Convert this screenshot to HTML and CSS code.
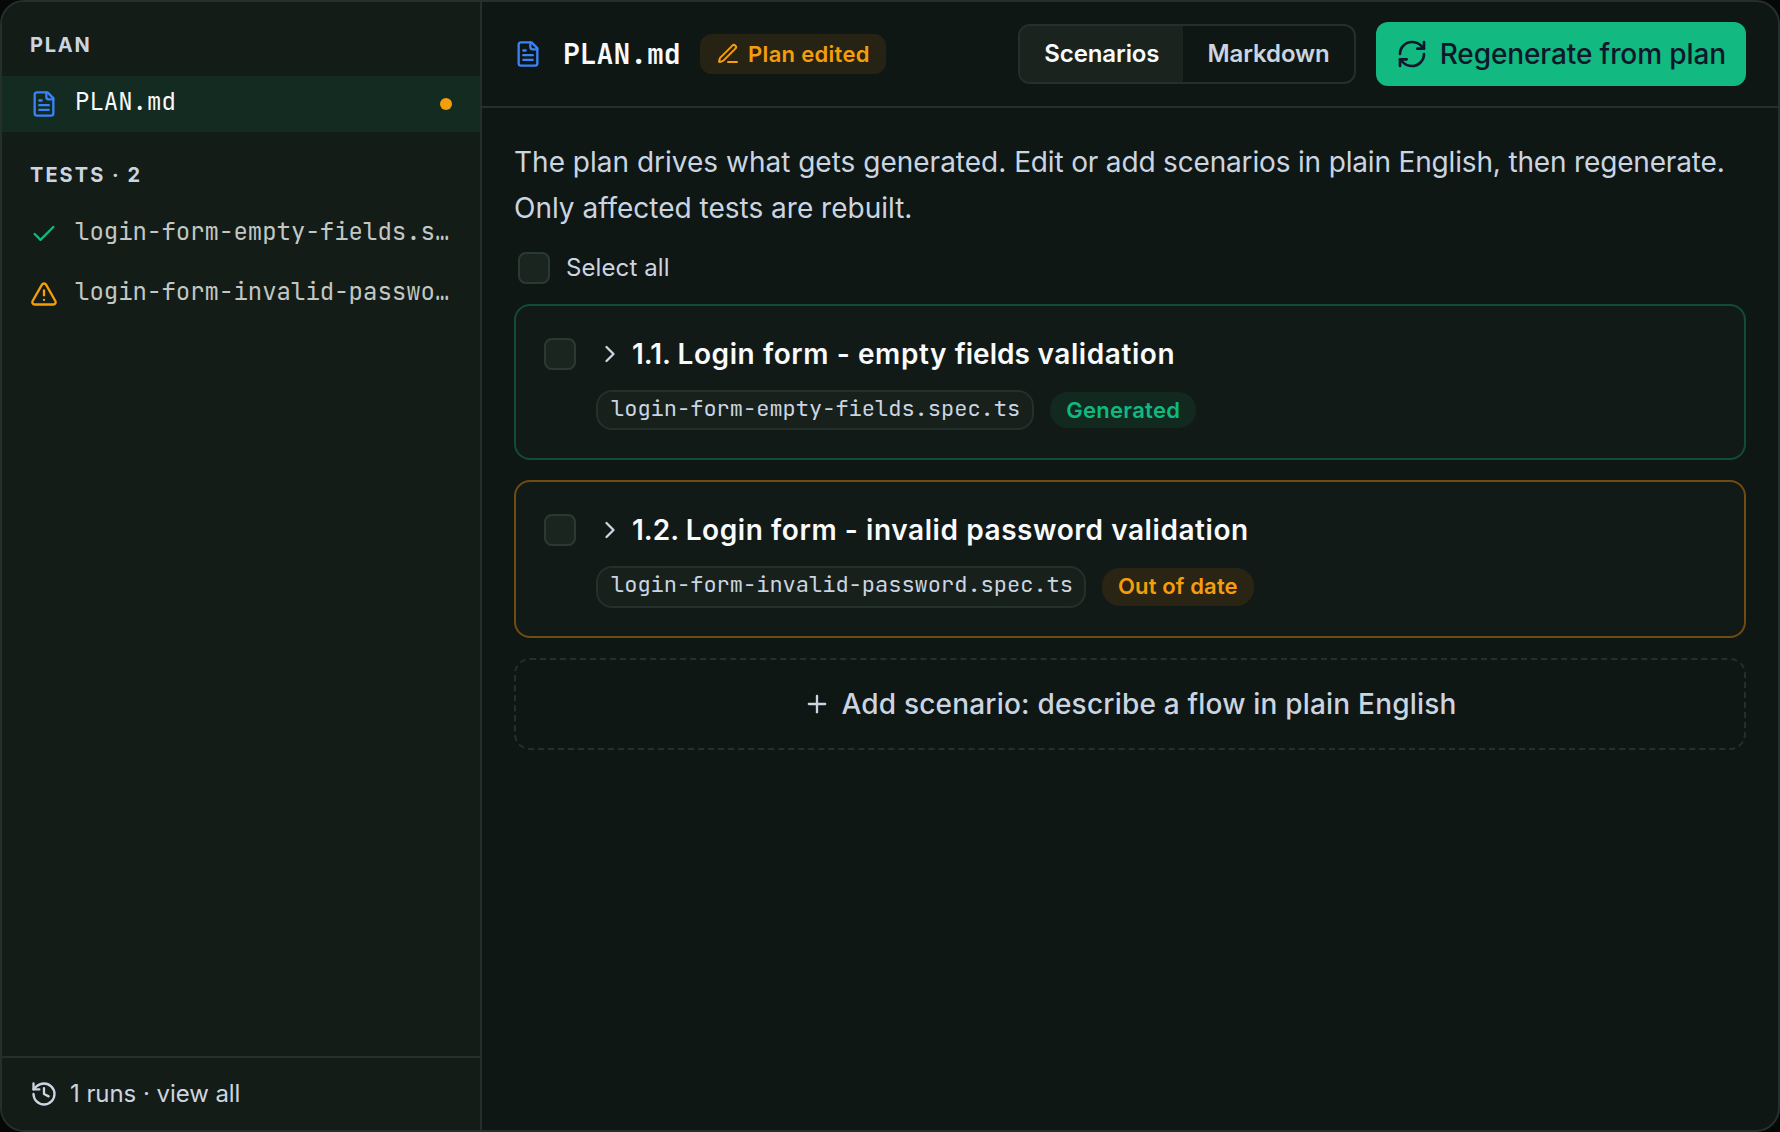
FILE: index.html
```html
<!DOCTYPE html>
<html lang="en">
<head>
<meta charset="utf-8">
<title>PLAN.md</title>
<link rel="stylesheet" href="styles.css">
</head>
<body>
<svg class="sprite" aria-hidden="true">
  <symbol id="file" viewBox="0 0 24 24"><path d="M15 2H6a2 2 0 0 0-2 2v16a2 2 0 0 0 2 2h12a2 2 0 0 0 2-2V7Z"/><path d="M14 2v4a2 2 0 0 0 2 2h4"/><path d="M10 9H8"/><path d="M16 13H8"/><path d="M16 17H8"/></symbol>
  <symbol id="check" viewBox="0 0 24 24"><path d="M20 6 9 17l-5-5"/></symbol>
  <symbol id="alert" viewBox="0 0 24 24"><path d="m21.73 18-8-14a2 2 0 0 0-3.48 0l-8 14A2 2 0 0 0 4 21h16a2 2 0 0 0 1.73-3"/><path d="M12 9v4"/><path d="M12 17h.01"/></symbol>
  <symbol id="history" viewBox="0 0 24 24"><path d="M3 12a9 9 0 1 0 9-9 9.75 9.75 0 0 0-6.74 2.74L3 8"/><path d="M3 3v5h5"/><path d="M12 7v5l4 2"/></symbol>
  <symbol id="pen" viewBox="0 0 24 24"><path d="M12 20h9"/><path d="M16.376 3.622a1 1 0 0 1 3.002 3.002L7.368 18.635a2 2 0 0 1-.855.506l-2.872.838a.5.5 0 0 1-.62-.62l.838-2.872a2 2 0 0 1 .506-.854z"/></symbol>
  <symbol id="refresh" viewBox="0 0 24 24"><path d="M3 12a9 9 0 0 1 9-9 9.75 9.75 0 0 1 6.74 2.74L21 8"/><path d="M21 3v5h-5"/><path d="M21 12a9 9 0 0 1-9 9 9.75 9.75 0 0 1-6.74-2.74L3 16"/><path d="M8 16H3v5"/></symbol>
  <symbol id="chevron" viewBox="0 0 24 24"><path d="m9 18 6-6-6-6"/></symbol>
  <symbol id="plus" viewBox="0 0 24 24"><path d="M5 12h14"/><path d="M12 5v14"/></symbol>
</svg>
<div class="window">
  <aside class="sidebar">
    <h2 class="label">PLAN</h2>
    <div class="row row-active">
      <svg class="icon blue"><use href="#file"/></svg>
      <span class="row-name">PLAN.md</span>
      <span class="dot"></span>
    </div>
    <h2 class="label label-tests">TESTS · 2</h2>
    <div class="row row-test">
      <svg class="icon green"><use href="#check"/></svg>
      <span class="row-name">login-form-empty-fields.spec.ts</span>
    </div>
    <div class="row row-test">
      <svg class="icon amber"><use href="#alert"/></svg>
      <span class="row-name">login-form-invalid-password.spec.ts</span>
    </div>
    <div class="runs">
      <svg class="icon"><use href="#history"/></svg>
      <span class="runs-text">1 runs · view all</span>
    </div>
  </aside>
  <main class="main">
    <header class="header">
      <svg class="icon blue"><use href="#file"/></svg>
      <h1 class="title">PLAN.md</h1>
      <span class="edited"><svg class="icon"><use href="#pen"/></svg><span>Plan edited</span></span>
      <div class="tabs">
        <button class="tab tab-on">Scenarios</button>
        <button class="tab">Markdown</button>
      </div>
      <button class="regen"><svg class="icon"><use href="#refresh"/></svg><span>Regenerate from plan</span></button>
    </header>
    <section class="content">
      <p class="intro">The plan drives what gets generated. <span class="hint">Edit or add scenarios in plain English, then regenerate.</span> Only affected tests are rebuilt.</p>
      <label class="select-all"><span class="box"></span><span class="select-text">Select all</span></label>
      <article class="card card-ok">
        <span class="box"></span>
        <div class="card-body">
          <div class="card-head"><svg class="icon"><use href="#chevron"/></svg><h3 class="card-title"><span class="tight">1.1. </span>Login form - empty <span class="tight">fields</span> validation</h3></div>
          <div class="meta"><span class="spec">login-form-empty-fields.spec.ts</span><span class="status">Generated</span></div>
        </div>
      </article>
      <article class="card card-stale">
        <span class="box"></span>
        <div class="card-body">
          <div class="card-head"><svg class="icon"><use href="#chevron"/></svg><h3 class="card-title"><span class="tight">1.2. </span>Login form - invalid password validation</h3></div>
          <div class="meta"><span class="spec">login-form-invalid-password.spec.ts</span><span class="status">Out of date</span></div>
        </div>
      </article>
      <button class="add"><svg class="icon"><use href="#plus"/></svg><span>Add scenario: describe a flow in plain English</span></button>
    </section>
  </main>
</div>
</body>
</html>
```
FILE: styles.css
```css
:root {
  --line: #24302b;
  --text: #cbd5e1;
  --bright: #f8fafc;
  --green: #10b981;
  --amber: #f59e0b;
  --mono: "JetBrains Mono", "Liberation Mono", monospace;
}
* { box-sizing: border-box; }
body {
  margin: 0;
  background: #050807;
  color: var(--text);
  font-family: Inter, "Liberation Sans", sans-serif;
}
h1, h2, h3, p { margin: 0; }
button { margin: 0; padding: 0; border: 0; background: none; color: inherit; font: inherit; }
.sprite { display: none; }
.icon {
  flex: none;
  width: 28px;
  height: 28px;
  fill: none;
  stroke: currentColor;
  stroke-width: 2;
  stroke-linecap: round;
  stroke-linejoin: round;
}
.blue { color: #3b82f6; }
.green { color: var(--green); }
.amber { color: var(--amber); }

.window {
  display: grid;
  grid-template-columns: 480px 1fr;
  height: 1132px;
  border: 2px solid var(--line);
  border-radius: 24px;
  background: #0f1714;
  overflow: hidden;
}

.sidebar {
  display: flex;
  flex-direction: column;
  border-right: 2px solid var(--line);
  background: #141c17;
}
.label {
  height: 74px;
  padding: 26px 28px 0;
  font-size: 20px;
  font-weight: 700;
  line-height: 34px;
  letter-spacing: 1.8px;
}
.label-tests { height: 72px; letter-spacing: 2.05px; }
.row {
  display: flex;
  align-items: center;
  gap: 17px;
  height: 56px;
  padding: 0 28px;
}
.row-active { background: #132b21; }
.row-test { height: 60px; color: #c1c7c4; }
.row-name {
  flex: 1;
  min-width: 0;
  overflow: hidden;
  white-space: nowrap;
  text-overflow: ellipsis;
  font-family: var(--mono);
  font-size: 24px;
  line-height: 36px;
  margin-bottom: 4px;
}
.row-active .row-name { color: var(--bright); }
.dot { width: 12px; height: 12px; border-radius: 50%; background: var(--amber); }
.runs {
  display: flex;
  align-items: center;
  gap: 12px;
  height: 74px;
  margin-top: auto;
  padding: 0 28px;
  border-top: 2px solid var(--line);
  font-size: 24px;
}
.runs-text { letter-spacing: -0.06px; padding-bottom: 2px; }

.main { display: flex; flex-direction: column; min-width: 0; }
.header {
  display: flex;
  align-items: center;
  height: 106px;
  padding: 0 32px;
  border-bottom: 2px solid var(--line);
}
.title {
  margin: 0 19.5px 0 21px;
  color: var(--bright);
  font-family: var(--mono);
  font-size: 28px;
  font-weight: 600;
  line-height: 40px;
}
.edited {
  display: flex;
  align-items: center;
  gap: 8px;
  height: 40px;
  padding: 0 16px;
  border-radius: 12px;
  background: #272314;
  color: var(--amber);
  font-size: 22px;
  font-weight: 600;
  letter-spacing: 0.3px;
}
.edited .icon { width: 24px; height: 24px; }
.tabs {
  display: flex;
  height: 60px;
  margin-left: auto;
  border: 2px solid var(--line);
  border-radius: 12px;
  overflow: hidden;
}
.tab { padding: 0 24px 2px; font-size: 24px; font-weight: 600; letter-spacing: -0.1px; }
.tab-on { background: #1a231e; color: var(--bright); }
.regen {
  display: flex;
  align-items: center;
  gap: 12px;
  height: 64px;
  margin-left: 20px;
  padding: 0 20px;
  border-radius: 12px;
  background: #12b981;
  color: #0f172a;
  font-size: 28px;
  font-weight: 500;
  letter-spacing: -0.1px;
}
.regen .icon { width: 32px; height: 32px; }

.content { padding: 31px 32px 32px; }
.intro { font-size: 28px; line-height: 46px; }
.hint { letter-spacing: -0.165px; }
.select-all {
  display: flex;
  align-items: center;
  gap: 16px;
  height: 32px;
  margin: 21px 4px 20px;
  font-size: 24px;
}
.select-text { padding-bottom: 2px; letter-spacing: 0.1px; }
.box {
  flex: none;
  width: 32px;
  height: 32px;
  border: 2px solid #2a3a33;
  border-radius: 8px;
  background: #1a251f;
}
.card {
  display: flex;
  gap: 20px;
  height: 156px;
  margin-bottom: 20px;
  padding: 32px 28px;
  border: 2px solid #124b39;
  border-radius: 16px;
  background: #121a17;
}
.card-stale { height: 158px; border-color: #714b10; }
.card-head { display: flex; align-items: center; gap: 8px; height: 32px; }
.card-title {
  color: var(--bright);
  font-size: 28px;
  font-weight: 600;
  line-height: 32px;
  letter-spacing: 0.58px;
}
.card-title .tight { letter-spacing: 0; }
.meta { display: flex; align-items: center; gap: 16px; margin-top: 20px; }
.spec {
  height: 40px;
  padding: 0 12px 0 13px;
  border: 2px solid var(--line);
  border-radius: 16px;
  background: #17201b;
  font-family: var(--mono);
  font-size: 22px;
  line-height: 33px;
}
.status {
  height: 36px;
  padding: 0 16px;
  border-radius: 18px;
  background: #12291f;
  color: var(--green);
  font-size: 22px;
  font-weight: 600;
  line-height: 36px;
  letter-spacing: 0.3px;
}
.card-stale .spec { height: 42px; padding: 0 11px 0 13px; }
.card-stale .status {
  height: 38px;
  background: #292414;
  color: var(--amber);
  letter-spacing: 0.15px;
}
.add {
  display: flex;
  align-items: center;
  justify-content: center;
  gap: 10px;
  width: 100%;
  height: 92px;
  border: 2px dashed var(--line);
  border-radius: 16px;
  font-size: 28px;
  font-weight: 500;
  letter-spacing: 0.2px;
}
```
